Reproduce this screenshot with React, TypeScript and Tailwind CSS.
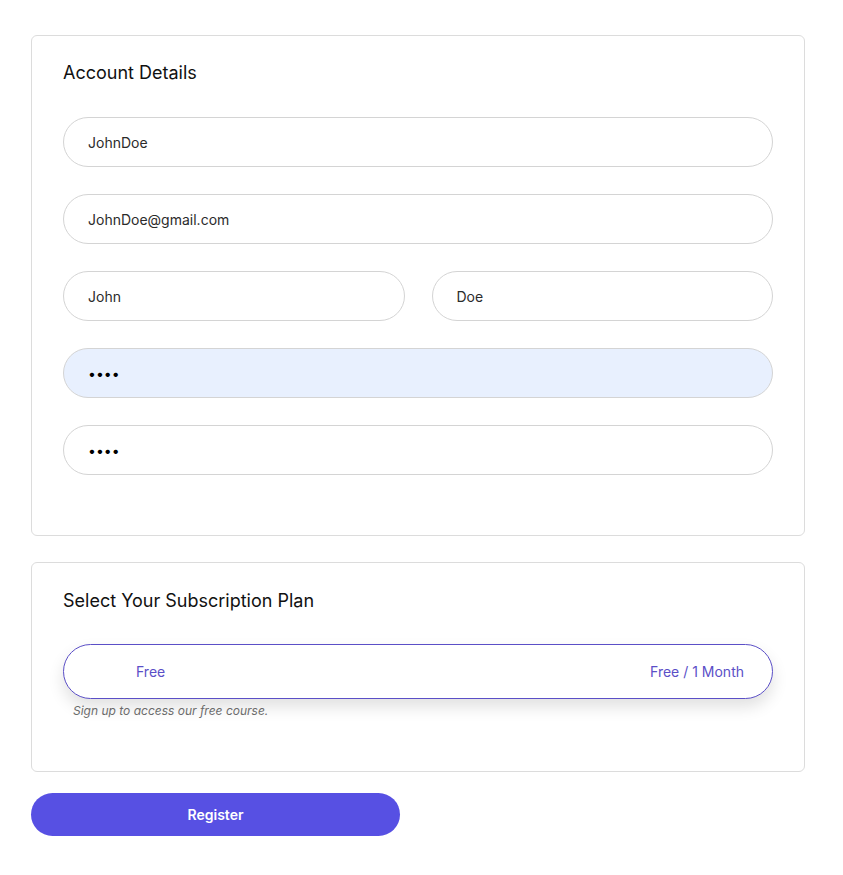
import React from 'react';

const inputBase =
  'w-full h-[50px] rounded-full border border-[#d4d4d4] px-6 text-sm text-[#2b2b2b] outline-none';

const Field: React.FC<{ value: string; type?: string; filled?: boolean }> = ({ value, type = 'text', filled }) => (
  <input
    readOnly
    type={type}
    value={value}
    className={`${inputBase} ${filled ? 'bg-[#e8f0fe] border-[#cfd6e4]' : 'bg-white'} ${type === 'password' ? 'text-black' : ''}`}
  />
);

export default function App() {
  return (
    <div className="min-h-screen bg-white pl-[31px] pr-[38px] pt-[35px] pb-10" style={{ fontFamily: 'Inter, "Noto Sans", sans-serif' }}>
      <div className="rounded-md border border-[#dcdcdc] px-[31px] pt-[23px] pb-[60px]">
        <h2 className="text-lg leading-7 text-[#111] mb-[30px]">Account Details</h2>
        <div className="flex flex-col gap-[27px]">
          <Field value="JohnDoe" />
          <Field value="JohnDoe@gmail.com" />
          <div className="grid grid-cols-2 gap-[27px]">
            <Field value="John" />
            <Field value="Doe" />
          </div>
          <Field value="1234" type="password" filled />
          <Field value="1234" type="password" />
        </div>
      </div>

      <div className="mt-[26px] rounded-md border border-[#dcdcdc] px-[31px] pt-[24px] pb-[52px]">
        <h2 className="text-lg leading-7 text-[#111] mb-[29px]">Select Your Subscription Plan</h2>
        <div className="flex h-[55px] items-center justify-between rounded-full border border-[#5b4fc7] bg-white pl-[72px] pr-[28px] text-sm text-[#5b4fc7] shadow-[0_8px_16px_rgba(0,0,0,0.12)]">
          <span>Free</span>
          <span>Free / 1 Month</span>
        </div>
        <p className="mt-1 pl-[10px] text-xs leading-4 italic text-[#6b6b6b]">Sign up to access our free course.</p>
      </div>

      <button className="mt-[21px] h-[43px] w-[369px] rounded-full bg-[#5750e3] text-sm font-semibold text-white">
        Register
      </button>
    </div>
  );
}
